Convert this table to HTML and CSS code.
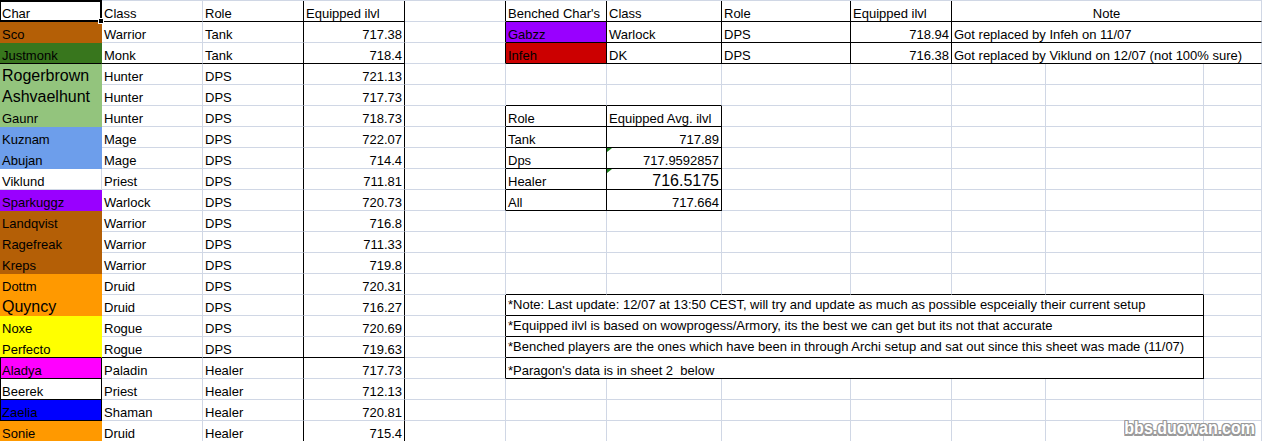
FILE: index.html
```html
<!DOCTYPE html>
<html>
<head>
<meta charset="utf-8">
<title>Roster</title>
<link rel="stylesheet" href="styles.css">
</head>
<body>
<div class="sheet">
  <div class="row">
    <div class="c B sel">Char</div><div class="c B">Class</div><div class="c B R">Role</div><div class="c B R">Equipped ilvl</div>
    <div class="c R"></div>
    <div class="c B R">Benched Char's</div><div class="c B R">Class</div><div class="c B R">Role</div><div class="c B R">Equipped ilvl</div>
    <div class="c B s3 ctr">Note</div>
  </div>
  <div class="row">
    <div class="c wr">Sco</div><div class="c">Warrior</div><div class="c R">Tank</div><div class="c R n">717.38</div>
    <div class="c R"></div>
    <div class="c wl B R">Gabzz</div><div class="c B R">Warlock</div><div class="c B R">DPS</div><div class="c B R n">718.94</div>
    <div class="c B s3">Got replaced by Infeh on 11/07</div>
  </div>
  <div class="row">
    <div class="c mk B">Justmonk</div><div class="c B">Monk</div><div class="c B R">Tank</div><div class="c B R n">718.4</div>
    <div class="c R"></div>
    <div class="c dk B R">Infeh</div><div class="c B R">DK</div><div class="c B R">DPS</div><div class="c B R n">716.38</div>
    <div class="c B s3">Got replaced by Viklund on 12/07 (not 100% sure)</div>
  </div>
  <div class="row">
    <div class="c hu big">Rogerbrown</div><div class="c">Hunter</div><div class="c R">DPS</div><div class="c R n">721.13</div>
    <div class="c"></div><div class="c"></div><div class="c"></div><div class="c"></div><div class="c"></div><div class="c"></div><div class="c"></div><div class="c"></div>
  </div>
  <div class="row">
    <div class="c hu big">Ashvaelhunt</div><div class="c">Hunter</div><div class="c R">DPS</div><div class="c R n">717.73</div>
    <div class="c"></div><div class="c B"></div><div class="c B"></div><div class="c"></div><div class="c"></div><div class="c"></div><div class="c"></div><div class="c"></div>
  </div>
  <div class="row">
    <div class="c hu">Gaunr</div><div class="c">Hunter</div><div class="c R">DPS</div><div class="c R n">718.73</div>
    <div class="c R"></div><div class="c B R">Role</div><div class="c B R">Equipped Avg. ilvl</div><div class="c"></div><div class="c"></div><div class="c"></div><div class="c"></div><div class="c"></div>
  </div>
  <div class="row">
    <div class="c mg">Kuznam</div><div class="c">Mage</div><div class="c R">DPS</div><div class="c R n">722.07</div>
    <div class="c R"></div><div class="c B R">Tank</div><div class="c B R n">717.89</div><div class="c"></div><div class="c"></div><div class="c"></div><div class="c"></div><div class="c"></div>
  </div>
  <div class="row">
    <div class="c mg">Abujan</div><div class="c">Mage</div><div class="c R">DPS</div><div class="c R n">714.4</div>
    <div class="c R"></div><div class="c B R">Dps</div><div class="c B R n tri">717.9592857</div><div class="c"></div><div class="c"></div><div class="c"></div><div class="c"></div><div class="c"></div>
  </div>
  <div class="row">
    <div class="c">Viklund</div><div class="c">Priest</div><div class="c R">DPS</div><div class="c R n">711.81</div>
    <div class="c R"></div><div class="c B R">Healer</div><div class="c B R n tri big">716.5175</div><div class="c"></div><div class="c"></div><div class="c"></div><div class="c"></div><div class="c"></div>
  </div>
  <div class="row">
    <div class="c wl">Sparkuggz</div><div class="c">Warlock</div><div class="c R">DPS</div><div class="c R n">720.73</div>
    <div class="c R"></div><div class="c B R">All</div><div class="c B R n">717.664</div><div class="c"></div><div class="c"></div><div class="c"></div><div class="c"></div><div class="c"></div>
  </div>
  <div class="row">
    <div class="c wr">Landqvist</div><div class="c">Warrior</div><div class="c R">DPS</div><div class="c R n">716.8</div>
    <div class="c"></div><div class="c"></div><div class="c"></div><div class="c"></div><div class="c"></div><div class="c"></div><div class="c"></div><div class="c"></div>
  </div>
  <div class="row">
    <div class="c wr">Ragefreak</div><div class="c">Warrior</div><div class="c R">DPS</div><div class="c R n">711.33</div>
    <div class="c"></div><div class="c"></div><div class="c"></div><div class="c"></div><div class="c"></div><div class="c"></div><div class="c"></div><div class="c"></div>
  </div>
  <div class="row">
    <div class="c wr">Kreps</div><div class="c">Warrior</div><div class="c R">DPS</div><div class="c R n">719.8</div>
    <div class="c"></div><div class="c"></div><div class="c"></div><div class="c"></div><div class="c"></div><div class="c"></div><div class="c"></div><div class="c"></div>
  </div>
  <div class="row">
    <div class="c dr">Dottm</div><div class="c">Druid</div><div class="c R">DPS</div><div class="c R n">720.31</div>
    <div class="c"></div><div class="c B"></div><div class="c B"></div><div class="c B"></div><div class="c B"></div><div class="c B"></div><div class="c B"></div><div class="c"></div>
  </div>
  <div class="row">
    <div class="c dr big">Quyncy</div><div class="c">Druid</div><div class="c R">DPS</div><div class="c R n">716.27</div>
    <div class="c R"></div>
    <div class="c B R s6 up">*Note: Last update: 12/07 at 13:50 CEST, will try and update as much as possible espceially their current setup</div>
    <div class="c"></div>
  </div>
  <div class="row">
    <div class="c ro">Noxe</div><div class="c">Rogue</div><div class="c R">DPS</div><div class="c R n">720.69</div>
    <div class="c R"></div>
    <div class="c B R s6 up">*Equipped ilvl is based on wowprogess/Armory, its the best we can get but its not that accurate</div>
    <div class="c"></div>
  </div>
  <div class="row">
    <div class="c ro B">Perfecto</div><div class="c B">Rogue</div><div class="c B R">DPS</div><div class="c B R n">719.63</div>
    <div class="c R"></div>
    <div class="c B R s6 up">*Benched players are the ones which have been in through Archi setup and sat out since this sheet was made (11/07)</div>
    <div class="c"></div>
  </div>
  <div class="row">
    <div class="c pa B R L">Aladya</div><div class="c">Paladin</div><div class="c R">Healer</div><div class="c R n">717.73</div>
    <div class="c R"></div>
    <div class="c B R s6">*Paragon's data is in sheet 2&nbsp; below</div>
    <div class="c"></div>
  </div>
  <div class="row">
    <div class="c B R L">Beerek</div><div class="c">Priest</div><div class="c R">Healer</div><div class="c R n">712.13</div>
    <div class="c"></div><div class="c"></div><div class="c"></div><div class="c"></div><div class="c"></div><div class="c"></div><div class="c"></div><div class="c"></div>
  </div>
  <div class="row">
    <div class="c sh B R L">Zaelia</div><div class="c">Shaman</div><div class="c R">Healer</div><div class="c R n">720.81</div>
    <div class="c"></div><div class="c"></div><div class="c"></div><div class="c"></div><div class="c"></div><div class="c"></div><div class="c"></div><div class="c"></div>
  </div>
  <div class="row">
    <div class="c dr">Sonie</div><div class="c">Druid</div><div class="c R">Healer</div><div class="c R n">715.4</div>
    <div class="c"></div><div class="c"></div><div class="c"></div><div class="c"></div><div class="c"></div><div class="c"></div><div class="c"></div><div class="c"></div>
  </div>
</div>
<div class="wm">bbs.duowan.com</div>
</body>
</html>
```

FILE: styles.css
```css
html, body {
  margin: 0;
  padding: 0;
  overflow: hidden;
  background: #fff;
}

body {
  position: relative;
  width: 1262px;
  height: 441px;
  font-family: "Liberation Sans", Arial, sans-serif;
  font-size: 13px;
  color: #000;
}

.sheet {
  border-top: 1px solid #d0d7e5;
}

.row {
  display: grid;
  grid-template-columns: 102px 101px 101px 101px 101px 101px 115px 129px 101px 94px 158px 1fr;
}

.c {
  box-sizing: border-box;
  height: 21px;
  min-width: 0;
  padding: 0 2px;
  border-right: 1px solid #d0d7e5;
  border-bottom: 1px solid #d0d7e5;
  display: flex;
  align-items: flex-end;
  line-height: 15px;
  white-space: nowrap;
}

.n { justify-content: flex-end; }
.ctr { justify-content: center; }
.s3 { grid-column: span 3; }
.s6 { grid-column: span 6; }
.up { padding-bottom: 3px; }

.big {
  font-size: 16px;
  line-height: 17px;
}

/* class colours */
.wr, .mk, .hu, .mg, .wl, .dr, .ro, .pa, .sh, .dk {
  border-right-color: transparent;
  border-bottom-color: transparent;
}
.wr { background: #b45f06; }
.mk { background: #38761d; }
.hu { background: #93c47d; }
.mg { background: #6d9eeb; }
.wl { background: #9900ff; }
.dr { background: #ff9900; }
.ro { background: #ffff00; }
.pa { background: #ff00ff; }
.sh { background: #0000ff; }
.dk { background: #cc0000; }

/* black borders */
.R { border-right-color: #000; }
.B { border-bottom-color: #000; }
.L { box-shadow: inset 1px 0 0 #000; }

/* active cell */
.sel {
  position: relative;
  z-index: 2;
}
.sel::after {
  content: "";
  position: absolute;
  left: -1px;
  top: -1px;
  width: 103px;
  height: 22px;
  box-sizing: border-box;
  border: 2px solid #000;
}
.sel::before {
  content: "";
  position: absolute;
  left: 98px;
  top: 17px;
  width: 4px;
  height: 4px;
  background: #000;
  border: 1px solid #fff;
  z-index: 1;
}

/* error indicator */
.tri { position: relative; }
.tri::before {
  content: "";
  position: absolute;
  left: 0;
  top: 0;
  border-top: 4px solid #1a7f1a;
  border-right: 5px solid transparent;
}

/* watermark */
.wm {
  position: absolute;
  right: 7px;
  bottom: 3px;
  font-family: "Liberation Sans", Arial, sans-serif;
  font-weight: bold;
  font-size: 16px;
  line-height: 16px;
  color: #fff;
  transform: scaleY(1.2);
  transform-origin: bottom right;
  text-shadow: 1px 0 0 #9a9a9a, -1px 0 0 #9a9a9a, 0 1px 0 #9a9a9a, 0 -1px 0 #9a9a9a,
    1px 1px 0 #9a9a9a, -1px -1px 0 #9a9a9a, 1px -1px 0 #9a9a9a, -1px 1px 0 #9a9a9a;
}
```
